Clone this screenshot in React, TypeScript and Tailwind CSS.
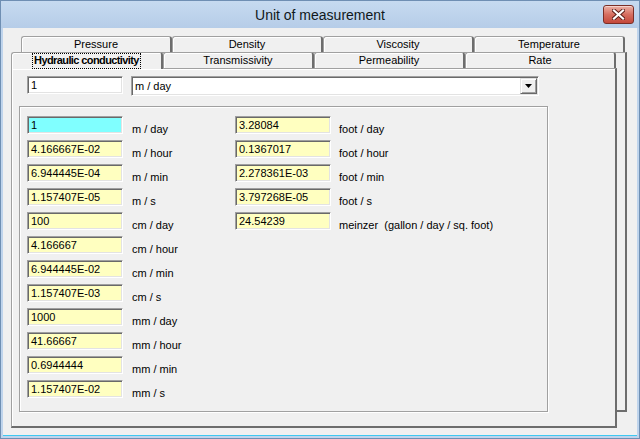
import React from 'react';

const leftRows: [string, string][] = [
  ['1', 'm / day'],
  ['4.166667E-02', 'm / hour'],
  ['6.944445E-04', 'm / min'],
  ['1.157407E-05', 'm / s'],
  ['100', 'cm / day'],
  ['4.166667', 'cm / hour'],
  ['6.944445E-02', 'cm / min'],
  ['1.157407E-03', 'cm / s'],
  ['1000', 'mm / day'],
  ['41.66667', 'mm / hour'],
  ['0.6944444', 'mm / min'],
  ['1.157407E-02', 'mm / s'],
];

const rightRows: [string, string][] = [
  ['3.28084', 'foot / day'],
  ['0.1367017', 'foot / hour'],
  ['2.278361E-03', 'foot / min'],
  ['3.797268E-05', 'foot / s'],
  ['24.54239', 'meinzer  (gallon / day / sq. foot)'],
];

const backTabs = ['Pressure', 'Density', 'Viscosity', 'Temperature'];
const frontTabs = ['Transmissivity', 'Permeability', 'Rate'];

const Field: React.FC<{ value: string; bg: string }> = ({ value, bg }) => (
  <div
    className={`w-[96px] h-[18px] shrink-0 border border-t-[#a0a0a0] border-l-[#a0a0a0] border-b-white border-r-white shadow-[inset_1px_1px_0_#696969,inset_-1px_-1px_0_#e3e3e3] pl-[3px] leading-[16px] whitespace-nowrap ${bg}`}
  >
    {value}
  </div>
);

const Row: React.FC<{ value: string; unit: string; active?: boolean; labelGap: string }> = ({
  value,
  unit,
  active,
  labelGap,
}) => (
  <div className="flex items-start h-[18px]">
    <Field value={value} bg={active ? 'bg-[#80ffff]' : 'bg-[#ffffc0]'} />
    <span className={`mt-[7px] leading-[13px] whitespace-pre ${labelGap}`}>{unit}</span>
  </div>
);

const Tab: React.FC<{ label: string }> = ({ label }) => (
  <div className="w-[151px] h-[16px] shrink-0 rounded-t-[3px] border-t border-l border-[#a0a0a0] border-r-2 border-r-[#6d6d6d] shadow-[inset_1px_1px_0_#ffffff] bg-[#f0f0f0] text-center leading-[14px]">
    {label}
  </div>
);

export default function App() {
  return (
    <div className="w-[640px] h-[439px] flex flex-col bg-[#bfd4ec] border border-[#6f8fb3] font-['Liberation_Sans',Arial,sans-serif] text-[11px] text-black overflow-hidden">
      {/* title bar */}
      <div className="h-[27px] shrink-0 grid grid-cols-[1fr_auto_1fr] items-start bg-gradient-to-b from-[#c6daf0] to-[#b6cde8]">
        <div />
        <div className="pt-[6px] text-[14px] leading-[16px] text-[#101820]">Unit of measurement</div>
        <div className="flex justify-end pt-[4px] pr-[5px]">
          <div className="w-[31px] h-[19px] rounded-[3px] border border-[#7a2e26] bg-gradient-to-b from-[#eab0a5] via-[#d66e60] to-[#c4473a] flex items-center justify-center shadow-[inset_0_1px_0_#f6d2cb]">
            <svg width="13" height="11" viewBox="0 0 13 11">
              <path d="M2 1.5 L11 9.5 M11 1.5 L2 9.5" stroke="#5a1d17" strokeWidth="4" strokeLinecap="square" />
              <path d="M2 1.5 L11 9.5 M11 1.5 L2 9.5" stroke="#ffffff" strokeWidth="2.2" strokeLinecap="square" />
            </svg>
          </div>
        </div>
      </div>

      {/* dialog body */}
      <div className="flex-1 mx-[2px] mb-[2px] bg-[#f0f0f0] border-b border-[#3ec8f0] pt-[8px] pl-[8px]">
        <div className="relative w-[616px]">
          {/* panel of the back row, lying behind */}
          <div className="absolute left-[10px] top-[16px] w-[606px] h-[360px] border-t border-l border-[#a0a0a0] border-r-2 border-b-2 border-r-[#6d6d6d] border-b-[#6d6d6d] bg-[#f0f0f0]" />

          <div className="relative flex ml-[10px]">
            {backTabs.map((t) => (
              <Tab key={t} label={t} />
            ))}
          </div>

          <div className="relative flex h-[16px] items-end">
            <div className="relative z-10 w-[152px] h-[17px] -mb-[1px] shrink-0 rounded-t-[3px] border-t border-l border-[#a0a0a0] border-r-2 border-r-[#6d6d6d] shadow-[inset_1px_1px_0_#ffffff] bg-[#f0f0f0] flex justify-center pt-[1px]">
              <span className="font-bold tracking-[-0.6px] leading-[13px] h-[14px] px-[1px] outline outline-1 outline-dotted outline-black">
                Hydraulic conductivity
              </span>
            </div>
            {frontTabs.map((t) => (
              <div
                key={t}
                className="w-[151px] h-[16px] shrink-0 rounded-t-[3px] border-t border-l border-[#a0a0a0] border-r-2 border-r-[#6d6d6d] shadow-[inset_1px_1px_0_#ffffff] bg-[#f0f0f0] text-center leading-[14px]"
              >
                {t}
              </div>
            ))}
          </div>

          {/* front panel */}
          <div className="relative w-[606px] h-[360px] border-t border-l border-[#a0a0a0] border-r-2 border-b-2 border-r-[#6d6d6d] border-b-[#6d6d6d] shadow-[inset_1px_1px_0_#ffffff] bg-[#f0f0f0] pt-[7px] pl-[15px]">
            <div className="flex items-start gap-[8px] h-[20px]">
              <Field value="1" bg="bg-white" />
              <div className="w-[408px] h-[20px] flex border border-t-[#a0a0a0] border-l-[#a0a0a0] border-b-white border-r-white shadow-[inset_1px_1px_0_#696969,inset_-1px_-1px_0_#e3e3e3] bg-white">
                <div className="flex-1 pl-[3px] pt-[2px] leading-[14px]">m / day</div>
                <div className="w-[17px] h-[16px] mt-[1px] mr-[1px] bg-[#f0f0f0] border border-t-[#e3e3e3] border-l-[#e3e3e3] border-b-[#696969] border-r-[#696969] shadow-[inset_1px_1px_0_#ffffff,inset_-1px_-1px_0_#a0a0a0] flex items-center justify-center">
                  <svg width="7" height="4" viewBox="0 0 7 4">
                    <path d="M0 0 H7 L3.5 4 Z" fill="#000" />
                  </svg>
                </div>
              </div>
            </div>

            {/* group box */}
            <div className="mt-[10px] -ml-[8px] w-[529px] h-[306px] border border-[#a0a0a0] shadow-[inset_1px_1px_0_#ffffff,1px_1px_0_#ffffff] pt-[9px] pl-[7px] flex">
              <div className="w-[208px] flex flex-col gap-[6px]">
                {leftRows.map(([v, u], i) => (
                  <Row key={u} value={v} unit={u} active={i === 0} labelGap="ml-[9px]" />
                ))}
              </div>
              <div className="flex flex-col gap-[6px]">
                {rightRows.map(([v, u]) => (
                  <Row key={u} value={v} unit={u} labelGap="ml-[8px]" />
                ))}
              </div>
            </div>
          </div>
        </div>
      </div>
    </div>
  );
}
